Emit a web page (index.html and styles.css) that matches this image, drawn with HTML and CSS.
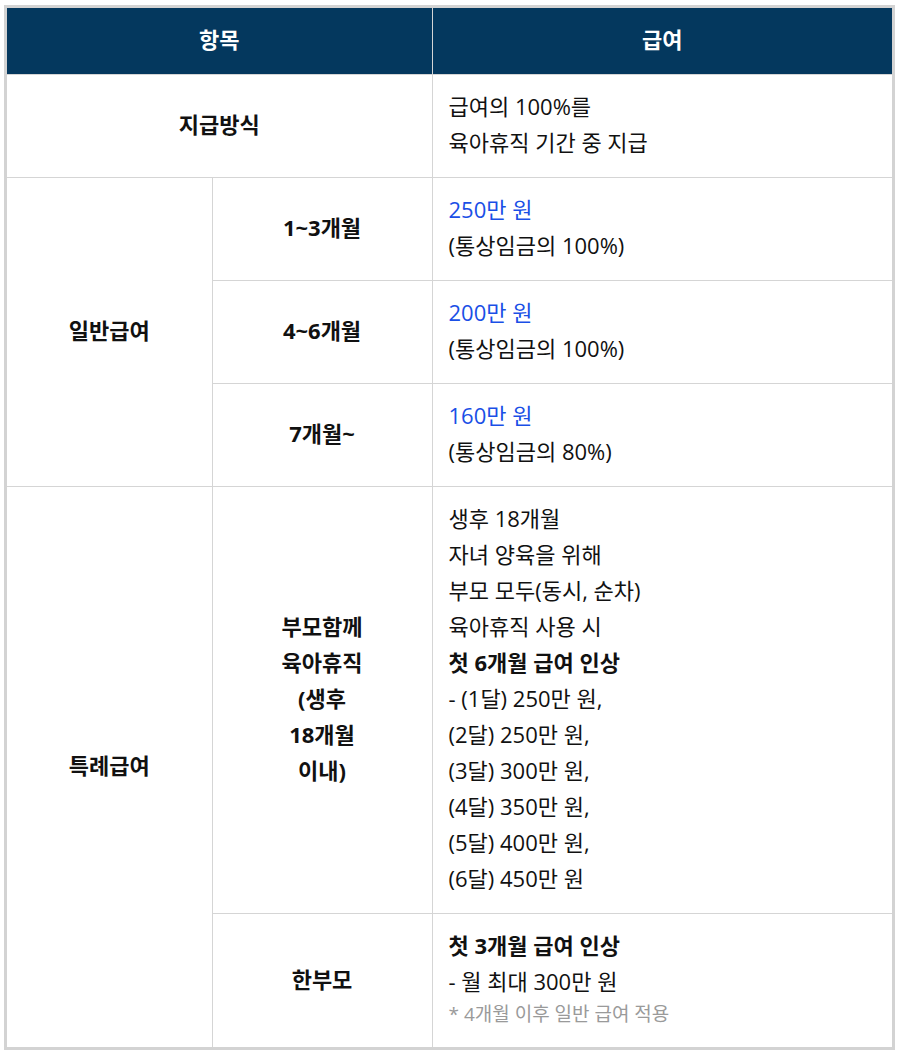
FILE: index.html
```html
<!DOCTYPE html>
<html lang="ko">
<head>
<meta charset="utf-8">
<link rel="stylesheet" href="styles.css">
</head>
<body>
<div class="wrap">
<table class="pay">
  <colgroup>
    <col class="c1">
    <col class="c2">
    <col class="c3">
  </colgroup>
  <thead>
    <tr><th colspan="2">항목</th><th>급여</th></tr>
  </thead>
  <tbody>
    <tr>
      <td colspan="2" class="label">지급방식</td>
      <td class="val">급여의 100%를<br>육아휴직 기간 중 지급</td>
    </tr>
    <tr>
      <td rowspan="3" class="label">일반급여</td>
      <td class="label">1~3개월</td>
      <td class="val"><span class="blue">250만 원</span><br>(통상임금의 100%)</td>
    </tr>
    <tr>
      <td class="label">4~6개월</td>
      <td class="val"><span class="blue">200만 원</span><br>(통상임금의 100%)</td>
    </tr>
    <tr>
      <td class="label">7개월~</td>
      <td class="val"><span class="blue">160만 원</span><br>(통상임금의 80%)</td>
    </tr>
    <tr>
      <td rowspan="2" class="label">특례급여</td>
      <td class="label">부모함께<br>육아휴직<br>(생후<br>18개월<br>이내)</td>
      <td class="val">생후 18개월<br>자녀 양육을 위해<br>부모 모두(동시, 순차)<br>육아휴직 사용 시<br><b>첫 6개월 급여 인상</b><br>- (1달) 250만 원,<br>(2달) 250만 원,<br>(3달) 300만 원,<br>(4달) 350만 원,<br>(5달) 400만 원,<br>(6달) 450만 원</td>
    </tr>
    <tr>
      <td class="label">한부모</td>
      <td class="val"><b>첫 3개월 급여 인상</b><br>- 월 최대 300만 원<span class="note">* 4개월 이후 일반 급여 적용</span></td>
    </tr>
  </tbody>
</table>
</div>
</body>
</html>
```
FILE: styles.css
```css
html, body {
  margin: 0;
  padding: 0;
  background: #fff;
}
body {
  font-family: "Open Sans", "Noto Sans CJK KR", "Noto Sans", sans-serif;
  color: #111;
}
.wrap {
  margin: 5px 0 0 4px;
  width: 885px;
  border: 3px solid #d3d3d3;
}
.pay {
  width: 100%;
  border-collapse: collapse;
  border-style: hidden;
  table-layout: fixed;
  font-size: 22px;
  line-height: 36px;
}
.c1 { width: 205px; }
.c2 { width: 220px; }
.c3 { width: 460px; }
.pay th {
  background: #04385e;
  color: #fff;
  font-weight: 700;
  padding: 13px 16px 17px;
  text-align: center;
  border: 1px solid #d5d5d5;
  border-top: none;
}
.pay td {
  border: 1px solid #d5d5d5;
  padding: 13px 16px 17px;
  vertical-align: middle;
}
.label {
  text-align: center;
  font-weight: 700;
}
.val {
  text-align: left;
}
.val b {
  font-weight: 700;
}
.blue {
  color: #1a4fe6;
}
.note {
  display: block;
  color: #9a9a9a;
  font-size: 19px;
  line-height: 31px;
}
```
